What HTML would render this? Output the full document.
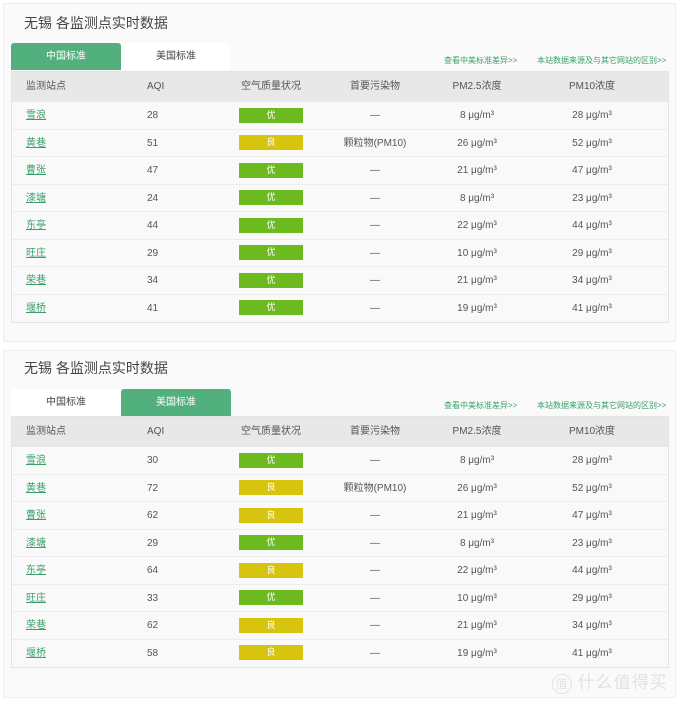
<!DOCTYPE html><html><head><meta charset="utf-8"><style>
body{margin:0;width:680px;height:701px;background:#fff;font-family:"Liberation Sans","Noto Sans CJK SC",sans-serif;position:relative;overflow:hidden}
.p{position:absolute;left:3px;width:673px;background:#fafafa;border:1px solid #eee;box-sizing:border-box}
.t{position:absolute;left:20px;font-size:14px;color:#444}
.tab{position:absolute;width:110px;height:27px;line-height:27px;text-align:center;font-size:10px;color:#444;background:#fff;border-radius:3px 3px 0 0}
.on{background:#52b07e;color:#fff}
.lk{position:absolute;font-size:8px;color:#3aa06a}
.tb{position:absolute;left:7px;width:658px;border:1px solid #e4e4e4;background:#f9f9f9;box-sizing:border-box}
.r{height:27.5px;border-bottom:1px solid #ececec;position:relative;font-size:10px;color:#555;box-sizing:border-box}
.r:last-child{border-bottom:none}
.h{height:30px;background:#e8e8e8;border:none;color:#555}
.r span{position:absolute;top:0;line-height:27px}
.h span{line-height:30px}
.a{left:14px}.b{left:135px}.c{left:227px;width:64px;text-align:center}.d{left:313px;width:100px;text-align:center}.e{left:415px;width:100px;text-align:center}.f{left:530px;width:100px;text-align:center}
.s a{color:#3aa06a;text-decoration:underline}
.g,.y{display:inline-block;font-style:normal;width:64px;height:15px;line-height:15px;color:#fff;font-size:9px;vertical-align:middle}
.g{background:#6cba1f}.y{background:#d6c40e}
</style></head><body>
<div class="p" style="top:3px;height:339px">
<div class="t" style="top:9px">无锡 各监测点实时数据</div>
<div class="tab on" style="left:7px;top:39px">中国标准</div>
<div class="tab" style="left:117px;top:39px">美国标准</div>
<div class="lk" style="left:440px;top:51px">查看中美标准差异&gt;&gt;</div>
<div class="lk" style="left:533px;top:51px">本站数据来源及与其它网站的区别&gt;&gt;</div>
<div class="tb" style="top:67px">
<div class="r h"><span class="a">监测站点</span><span class="b">AQI</span><span class="c" style="left:219px;width:80px">空气质量状况</span><span class="d">首要污染物</span><span class="e">PM2.5浓度</span><span class="f">PM10浓度</span></div>
<div class="r s"><span class="a"><a>雪浪</a></span><span class="b">28</span><span class="c"><i class="g">优</i></span><span class="d">—</span><span class="e">8 μg/m³</span><span class="f">28 μg/m³</span></div>
<div class="r s"><span class="a"><a>黄巷</a></span><span class="b">51</span><span class="c"><i class="y">良</i></span><span class="d">颗粒物(PM10)</span><span class="e">26 μg/m³</span><span class="f">52 μg/m³</span></div>
<div class="r s"><span class="a"><a>曹张</a></span><span class="b">47</span><span class="c"><i class="g">优</i></span><span class="d">—</span><span class="e">21 μg/m³</span><span class="f">47 μg/m³</span></div>
<div class="r s"><span class="a"><a>漆塘</a></span><span class="b">24</span><span class="c"><i class="g">优</i></span><span class="d">—</span><span class="e">8 μg/m³</span><span class="f">23 μg/m³</span></div>
<div class="r s"><span class="a"><a>东亭</a></span><span class="b">44</span><span class="c"><i class="g">优</i></span><span class="d">—</span><span class="e">22 μg/m³</span><span class="f">44 μg/m³</span></div>
<div class="r s"><span class="a"><a>旺庄</a></span><span class="b">29</span><span class="c"><i class="g">优</i></span><span class="d">—</span><span class="e">10 μg/m³</span><span class="f">29 μg/m³</span></div>
<div class="r s"><span class="a"><a>荣巷</a></span><span class="b">34</span><span class="c"><i class="g">优</i></span><span class="d">—</span><span class="e">21 μg/m³</span><span class="f">34 μg/m³</span></div>
<div class="r s"><span class="a"><a>堰桥</a></span><span class="b">41</span><span class="c"><i class="g">优</i></span><span class="d">—</span><span class="e">19 μg/m³</span><span class="f">41 μg/m³</span></div>
</div></div>
<div class="p" style="top:350px;height:348px">
<div class="t" style="top:7px">无锡 各监测点实时数据</div>
<div class="tab" style="left:7px;top:38px">中国标准</div>
<div class="tab on" style="left:117px;top:38px">美国标准</div>
<div class="lk" style="left:440px;top:49px">查看中美标准差异&gt;&gt;</div>
<div class="lk" style="left:533px;top:49px">本站数据来源及与其它网站的区别&gt;&gt;</div>
<div class="tb" style="top:65px">
<div class="r h"><span class="a">监测站点</span><span class="b">AQI</span><span class="c" style="left:219px;width:80px">空气质量状况</span><span class="d">首要污染物</span><span class="e">PM2.5浓度</span><span class="f">PM10浓度</span></div>
<div class="r s"><span class="a"><a>雪浪</a></span><span class="b">30</span><span class="c"><i class="g">优</i></span><span class="d">—</span><span class="e">8 μg/m³</span><span class="f">28 μg/m³</span></div>
<div class="r s"><span class="a"><a>黄巷</a></span><span class="b">72</span><span class="c"><i class="y">良</i></span><span class="d">颗粒物(PM10)</span><span class="e">26 μg/m³</span><span class="f">52 μg/m³</span></div>
<div class="r s"><span class="a"><a>曹张</a></span><span class="b">62</span><span class="c"><i class="y">良</i></span><span class="d">—</span><span class="e">21 μg/m³</span><span class="f">47 μg/m³</span></div>
<div class="r s"><span class="a"><a>漆塘</a></span><span class="b">29</span><span class="c"><i class="g">优</i></span><span class="d">—</span><span class="e">8 μg/m³</span><span class="f">23 μg/m³</span></div>
<div class="r s"><span class="a"><a>东亭</a></span><span class="b">64</span><span class="c"><i class="y">良</i></span><span class="d">—</span><span class="e">22 μg/m³</span><span class="f">44 μg/m³</span></div>
<div class="r s"><span class="a"><a>旺庄</a></span><span class="b">33</span><span class="c"><i class="g">优</i></span><span class="d">—</span><span class="e">10 μg/m³</span><span class="f">29 μg/m³</span></div>
<div class="r s"><span class="a"><a>荣巷</a></span><span class="b">62</span><span class="c"><i class="y">良</i></span><span class="d">—</span><span class="e">21 μg/m³</span><span class="f">34 μg/m³</span></div>
<div class="r s"><span class="a"><a>堰桥</a></span><span class="b">58</span><span class="c"><i class="y">良</i></span><span class="d">—</span><span class="e">19 μg/m³</span><span class="f">41 μg/m³</span></div>
</div>
<div style="position:absolute;left:548px;top:317px;font-size:17px;color:#e2e2e2;letter-spacing:1px"><span style="display:inline-block;width:18px;height:18px;border:1px solid #e2e2e2;border-radius:50%;font-size:12px;text-align:center;line-height:18px;vertical-align:middle">值</span> 什么值得买</div>
</div>
</body></html>
